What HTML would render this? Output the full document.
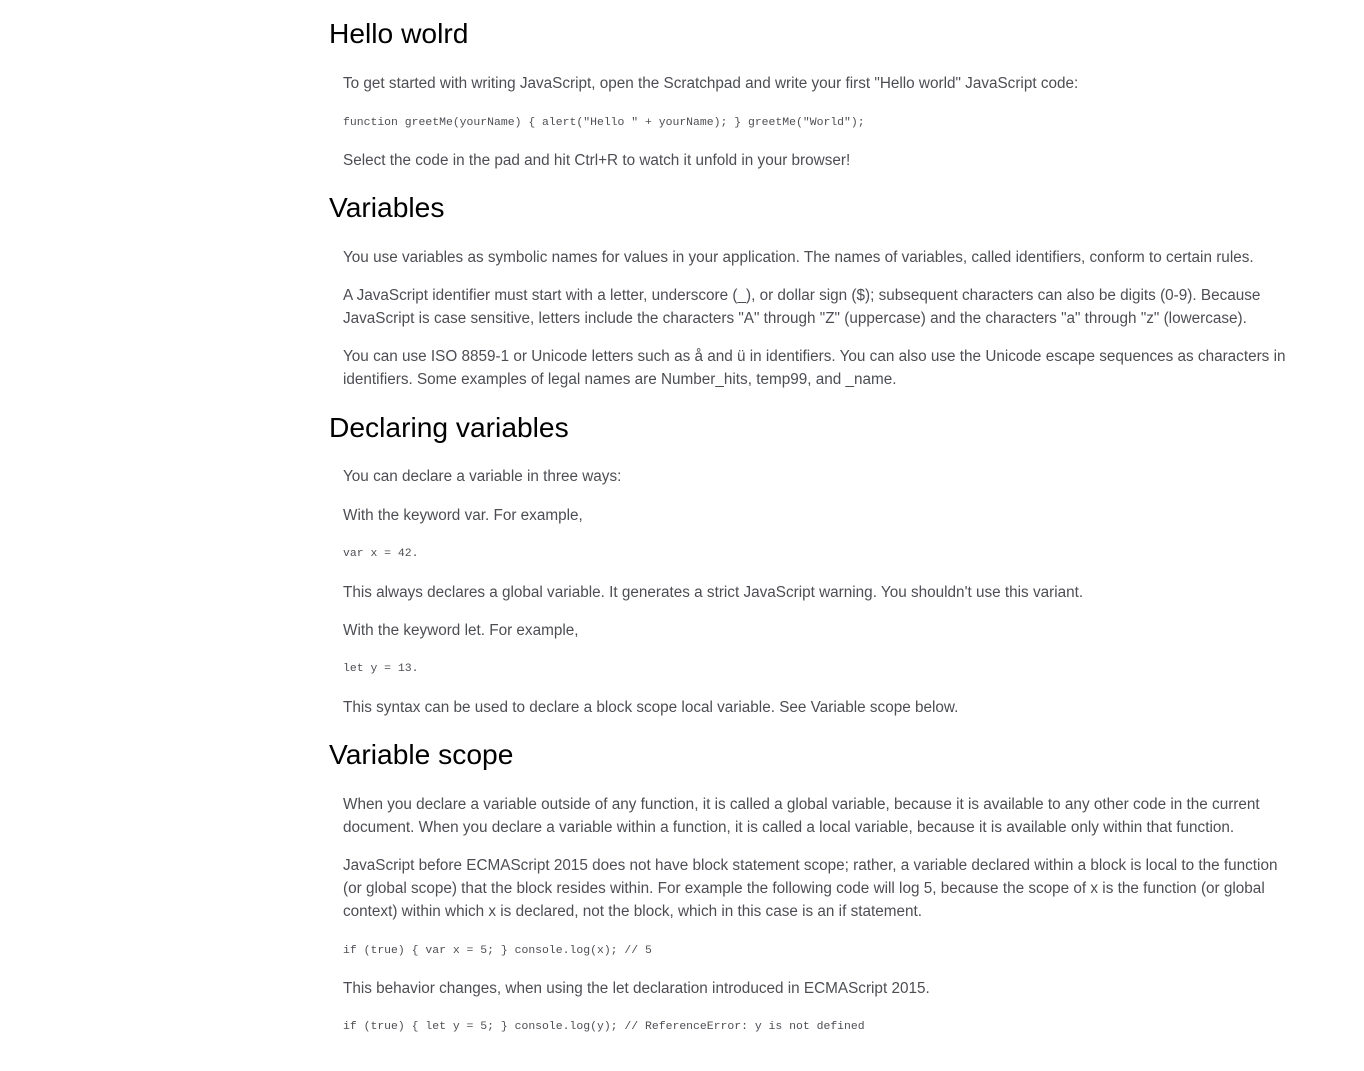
<!DOCTYPE html>
<html><head><meta charset="utf-8"><style>
html,body{margin:0;padding:0;background:#fff;width:1364px;height:1071px;overflow:hidden;position:relative}
.h{position:absolute;left:329px;margin:0;font:28.2px/34px "Liberation Sans",Arial,sans-serif;color:#000;font-weight:normal;white-space:nowrap}
.p{position:absolute;left:343px;width:952px;margin:0;font:15.3px/23px "Liberation Sans",Arial,sans-serif;color:#4d4e53}
.c{position:absolute;left:343px;margin:0;font:11.45px/16px "Liberation Mono",monospace;color:#4d4e53;white-space:pre}
</style></head><body>
<h1 class="h" style="top:16px">Hello wolrd</h1>
<p class="p" style="top:72px">To get started with writing JavaScript, open the Scratchpad and write your first "Hello world" JavaScript code:</p>
<div class="c" style="top:115px">function greetMe(yourName) { alert("Hello " + yourName); } greetMe("World");</div>
<p class="p" style="top:149px">Select the code in the pad and hit Ctrl+R to watch it unfold in your browser!</p>
<h2 class="h" style="top:190px">Variables</h2>
<p class="p" style="top:246px">You use variables as symbolic names for values in your application. The names of variables, called identifiers, conform to certain rules.</p>
<p class="p" style="top:284px">A JavaScript identifier must start with a letter, underscore (_), or dollar sign ($); subsequent characters can also be digits (0-9). Because JavaScript is case sensitive, letters include the characters "A" through "Z" (uppercase) and the characters "a" through "z" (lowercase).</p>
<p class="p" style="top:345px">You can use ISO 8859-1 or Unicode letters such as å and ü in identifiers. You can also use the Unicode escape sequences as characters in identifiers. Some examples of legal names are Number_hits, temp99, and _name.</p>
<h2 class="h" style="top:410px">Declaring variables</h2>
<p class="p" style="top:465px">You can declare a variable in three ways:</p>
<p class="p" style="top:504px">With the keyword var. For example,</p>
<div class="c" style="top:546px">var x = 42.</div>
<p class="p" style="top:581px">This always declares a global variable. It generates a strict JavaScript warning. You shouldn't use this variant.</p>
<p class="p" style="top:619px">With the keyword let. For example,</p>
<div class="c" style="top:661px">let y = 13.</div>
<p class="p" style="top:696px">This syntax can be used to declare a block scope local variable. See Variable scope below.</p>
<h2 class="h" style="top:737px">Variable scope</h2>
<p class="p" style="top:793px">When you declare a variable outside of any function, it is called a global variable, because it is available to any other code in the current document. When you declare a variable within a function, it is called a local variable, because it is available only within that function.</p>
<p class="p" style="top:854px">JavaScript before ECMAScript 2015 does not have block statement scope; rather, a variable declared within a block is local to the function (or global scope) that the block resides within. For example the following code will log 5, because the scope of x is the function (or global context) within which x is declared, not the block, which in this case is an if statement.</p>
<div class="c" style="top:943px">if (true) { var x = 5; } console.log(x); // 5</div>
<p class="p" style="top:977px">This behavior changes, when using the let declaration introduced in ECMAScript 2015.</p>
<div class="c" style="top:1019px">if (true) { let y = 5; } console.log(y); // ReferenceError: y is not defined</div>
</body></html>
